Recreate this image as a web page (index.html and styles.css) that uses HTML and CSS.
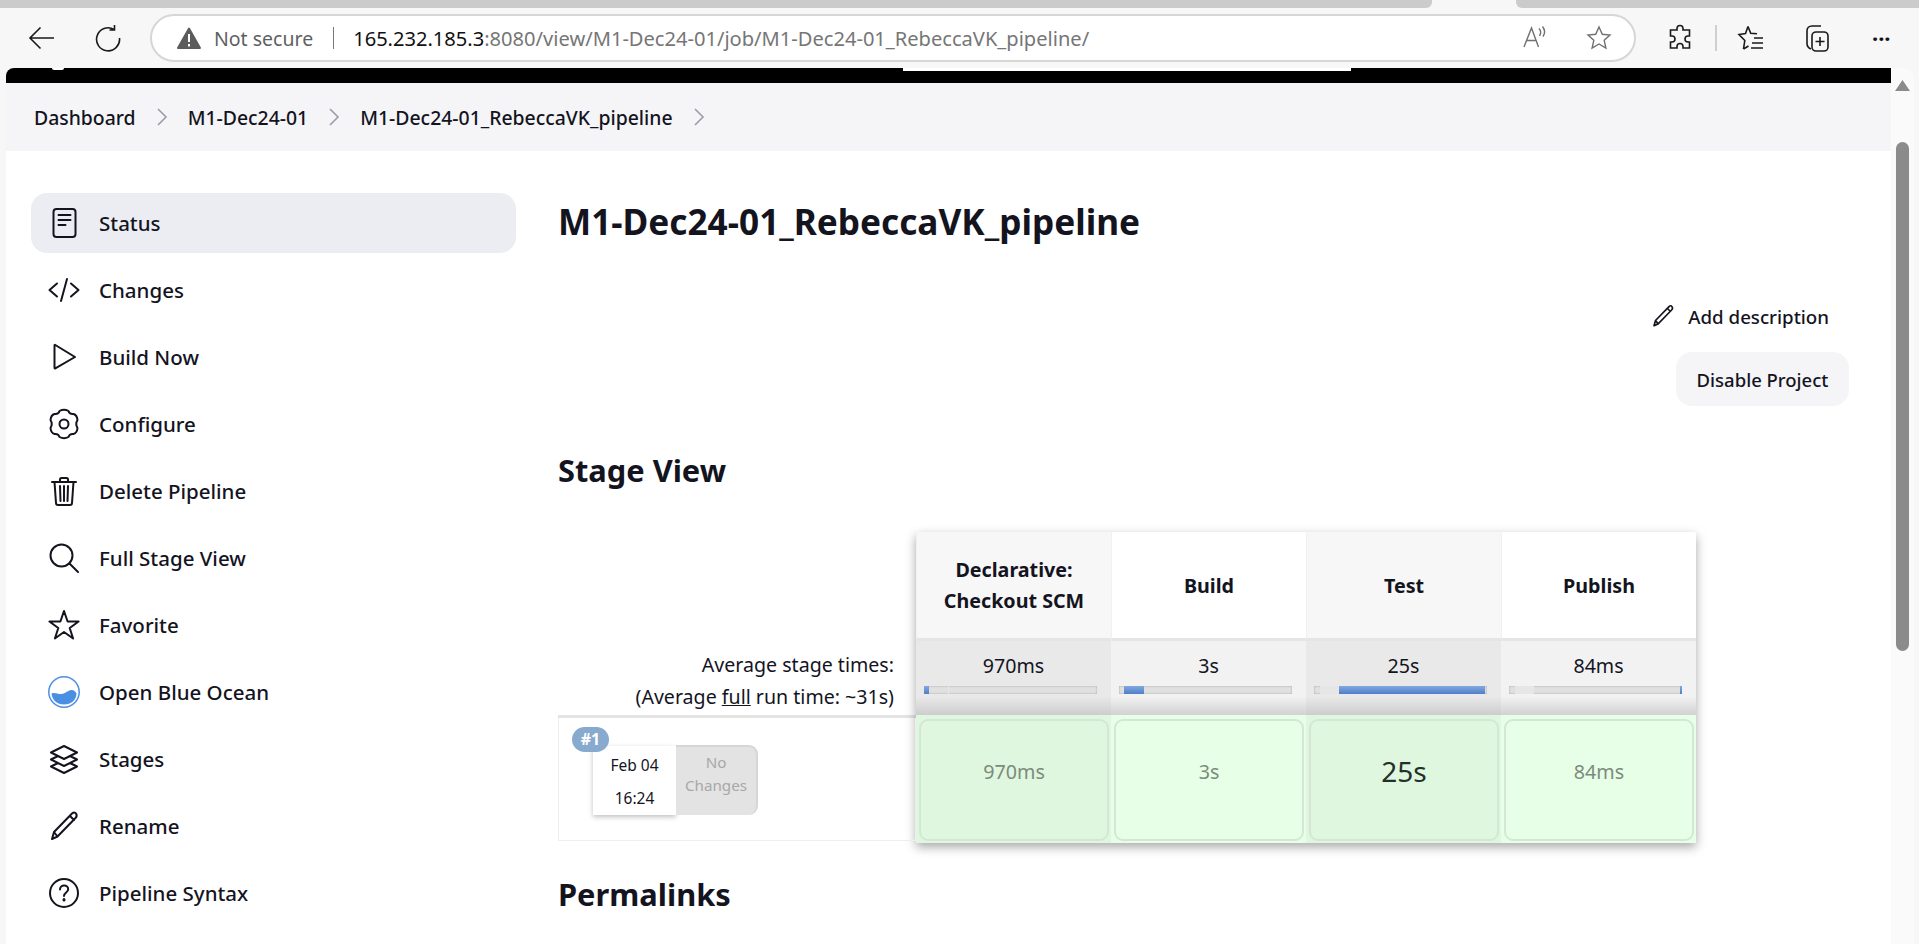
FILE: index.html
```html
<!DOCTYPE html>
<html lang="en">
<head>
    <meta charset="UTF-8">
    <meta name="viewport" content="width=device-width, initial-scale=1.0">
    <title>M1-Dec24-01_RebeccaVK_pipeline</title>
    <link rel="stylesheet" href="styles.css">
</head>
<body>
    <div class="tabstrip">
        <div class="tab-rest"></div>
        <div class="tab-gap"></div>
        <div class="tab-next"></div>
    </div>

    <div class="toolbar">
        <svg class="tool-back" width="28" height="28" viewBox="0 0 28 28"><path d="M26 14H2M12.500 3.500 2 14l10.500 10.500"/></svg>
        <svg class="tool-reload" width="28" height="28" viewBox="0 0 28 28"><path d="M20 5.500A11.500 11.500 0 1 0 25.500 14M20.500 1v5h-5"/></svg>
        <div class="addressbar">
            <svg class="warn" width="26" height="24" viewBox="0 0 26 24"><path d="M13 2.500 24 22H2z" fill="#5c5c5c" stroke="#5c5c5c" stroke-width="2" stroke-linejoin="round"/><path d="M13 8v8M13 18v2.500" stroke="#fff" stroke-width="2"/></svg>
            <span class="not-secure">Not secure</span>
            <span class="addr-sep"></span>
            <span class="url"><b>165.232.185.3</b>:8080/view/M1-Dec24-01/job/M1-Dec24-01_RebeccaVK_pipeline/</span>
            <span class="addr-space"></span>
            <svg class="addr-icon" width="26" height="26" viewBox="0 0 26 26"><path d="M2 22 9.500 3l7 19M4.500 15.500h10M17 3.500c2 2 2 5 .5 7.500M20.500 1.500c2.500 3 2.500 7 .5 10"/></svg>
            <svg class="addr-icon star-icon" width="26" height="26" viewBox="0 0 26 26"><path d="m13 2 3.300 7.300 7.700.8-5.800 5.200 1.700 7.700-6.900-4-6.900 4 1.700-7.700L2 10.100l7.700-.8z"/></svg>
        </div>
        <svg class="tool-icon ext" width="26" height="28" viewBox="0 0 26 28"><path d="M10 4.500c0-4 6-4 6 0V6h6.500v6H21c-4 0-4 6 0 6h1.500v6H16v-1.500c0-4-6-4-6 0V24H3.500v-6H5c4 0 4-6 0-6H3.500V6H10z"/></svg>
        <span class="tool-sep"></span>
        <svg class="tool-icon fav" width="28" height="28" viewBox="0 0 28 28"><path d="m11 2.500 2.700 6.800 6.300.5M6.500 25l1.300-8.500L2 10.500l6.500-1 2.500-7M6.500 25l5-3M17 14h9M15 19h11M14 24h12"/></svg>
        <svg class="tool-icon coll" width="28" height="30" viewBox="0 0 28 30"><path d="M8 26C5.500 25 4 23 4 20.500V8c0-3 2-5 5-5h9"/><rect x="9" y="9" width="16" height="19" rx="4"/><path d="M17 14v9M12.500 18.500h9"/></svg>
        <span class="tool-dots">···</span>
    </div>

    <div class="viewport">
        <div class="page">
            <div class="blackbar">
                <span class="black-dot"></span>
                <span class="black-search"></span>
            </div>
            <div class="breadcrumbs">
                <a>Dashboard</a>
                <svg class="crumb-arrow" width="12" height="20" viewBox="0 0 12 20"><path d="m2 2 8 8-8 8"/></svg>
                <a>M1-Dec24-01</a>
                <svg class="crumb-arrow" width="12" height="20" viewBox="0 0 12 20"><path d="m2 2 8 8-8 8"/></svg>
                <a>M1-Dec24-01_RebeccaVK_pipeline</a>
                <svg class="crumb-arrow" width="12" height="20" viewBox="0 0 12 20"><path d="m2 2 8 8-8 8"/></svg>
            </div>

            <div class="layout">
                <div class="sidebar">
                    <a class="nav-item active">
                        <svg class="ic" viewBox="0 0 32 32"><rect x="5.500" y="2" width="22" height="28" rx="3"/><path d="M10.500 8h12M10.500 13h12M10.500 18h7"/></svg>
                        Status
                    </a>
                    <a class="nav-item">
                        <svg class="ic" viewBox="0 0 32 32"><path d="M9 9.500 1.500 16 9 22.500M23 9.500l7.500 6.500-7.500 6.500M19 5l-6 22"/></svg>
                        Changes
                    </a>
                    <a class="nav-item">
                        <svg class="ic" viewBox="0 0 32 32"><path d="M6.500 4.500v22.500a.5.5 0 0 0 .8.400L27 16 7.300 4a.5.5 0 0 0-.8.500z"/></svg>
                        Build Now
                    </a>
                    <a class="nav-item">
                        <svg class="ic" viewBox="0 0 32 32"><path d="M11.500 3Q16 .5 20.500 3q1 3.500 5 3 3.500 1 4 6-2.500 4 0 8-.5 5-4 6-4-.5-5 3-4.500 2.500-9 0-1-3.500-5-3-3.500-1-4-6 2.500-4 0-8 .5-5 4-6 4 .5 5-3z"/><circle cx="16" cy="16" r="4.500"/></svg>
                        Configure
                    </a>
                    <a class="nav-item">
                        <svg class="ic" viewBox="0 0 32 32"><path d="M4 7h24M12 7V4.500A1.500 1.500 0 0 1 13.500 3h5A1.500 1.500 0 0 1 20 4.500V7M6.500 7 8 28a2 2 0 0 0 2 2h12a2 2 0 0 0 2-2l1.500-21M12 11l.5 15M16 11v15M20 11l-.5 15"/></svg>
                        Delete Pipeline
                    </a>
                    <a class="nav-item">
                        <svg class="ic" viewBox="0 0 32 32"><circle cx="13.500" cy="13.500" r="11"/><path d="m21.500 21.500 8.500 8.500"/></svg>
                        Full Stage View
                    </a>
                    <a class="nav-item">
                        <svg class="ic" viewBox="0 0 32 32"><path d="m16 2 3.600 10.500h11L21.700 19l3.400 10.500L16 23l-9.100 6.500L10.300 19 1.400 12.500h11z"/></svg>
                        Favorite
                    </a>
                    <a class="nav-item">
                        <svg class="ic ocean" viewBox="0 0 32 32"><circle cx="16" cy="16" r="15.200"/><path class="wave" d="M3.500 17.500c4-1.500 6.500 1 10 .5 4-.5 7-4 10-4s4 2 5 3.500C28.500 24 23 28.500 16 28.500S4 24 3.500 17.500z"/></svg>
                        Open Blue Ocean
                    </a>
                    <a class="nav-item">
                        <svg class="ic" viewBox="0 0 32 32"><path d="M16 3 29 9.500 16 16 3 9.500zM9 13.500 3 16.500 16 23l13-6.500-6-3M9 20.500 3 23.500 16 30l13-6.500-6-3"/></svg>
                        Stages
                    </a>
                    <a class="nav-item">
                        <svg class="ic" viewBox="0 0 32 32"><path d="M4 29l2-7L24 3.500c1.500-1.500 3-1.500 4 0s1 3-.5 4.500L9.500 26.500zM22 6l4 4M6 22l3.500 4.500"/></svg>
                        Rename
                    </a>
                    <a class="nav-item">
                        <svg class="ic" viewBox="0 0 32 32"><circle cx="16" cy="16" r="14"/><path d="M12 12.500c0-2.500 2-4 4.200-4s4 1.500 4 3.700c0 3.300-4.200 3.300-4.200 6.800"/><path class="dot" d="M16 22.500v.5"/></svg>
                        Pipeline Syntax
                    </a>
                    <a class="nav-item">
                        <svg class="ic" viewBox="0 0 32 32"><path d="M11 2h10"/></svg>
                    </a>
                </div>

                <div class="content">
                    <h1>M1-Dec24-01_RebeccaVK_pipeline</h1>

                    <div class="actions">
                        <a class="add-desc">
                            <svg class="ic-small" viewBox="0 0 32 32"><path d="M4 29l2-7L24 3.500c1.500-1.500 3-1.500 4 0s1 3-.5 4.500L9.500 26.500zM22 6l4 4M6 22l3.500 4.500"/></svg>
                            Add description
                        </a>
                        <button class="disable-btn">Disable Project</button>
                    </div>

                    <h2 class="stage-title">Stage View</h2>

                    <div class="stage-view">
                        <div class="labels">
                            <div class="avg-label">
                                <div>Average stage times:</div>
                                <div>(Average <u>full</u> run time: ~31s)</div>
                            </div>
                            <div class="build-row">
                                <span class="badge">#1</span>
                                <div class="build-date">
                                    <div>Feb 04</div>
                                    <div>16:24</div>
                                </div>
                                <div class="no-changes">No Changes</div>
                            </div>
                        </div>

                        <div class="stages">
                            <div class="stage-col odd">
                                <div class="stage-head">Declarative:<br>Checkout SCM</div>
                                <div class="stage-avg">
                                    <div>970ms</div>
                                    <div class="bar"><span class="bar-tick" style="left: 24px; width: 1px"></span><span class="bar-fill" style="left: 0; width: 5px"></span></div>
                                </div>
                                <div class="stage-cell"><div class="cell-box">970ms</div></div>
                            </div>
                            <div class="stage-col">
                                <div class="stage-head">Build</div>
                                <div class="stage-avg">
                                    <div>3s</div>
                                    <div class="bar"><span class="bar-fill" style="left: 5px; width: 20px"></span></div>
                                </div>
                                <div class="stage-cell"><div class="cell-box">3s</div></div>
                            </div>
                            <div class="stage-col odd">
                                <div class="stage-head">Test</div>
                                <div class="stage-avg">
                                    <div>25s</div>
                                    <div class="bar"><span class="bar-tick" style="left: 6px; width: 19px"></span><span class="bar-fill" style="left: 25px; width: 146px"></span></div>
                                </div>
                                <div class="stage-cell"><div class="cell-box big">25s</div></div>
                            </div>
                            <div class="stage-col">
                                <div class="stage-head">Publish</div>
                                <div class="stage-avg">
                                    <div>84ms</div>
                                    <div class="bar"><span class="bar-tick" style="left: 6px; width: 19px"></span><span class="bar-fill" style="left: 171px; width: 2px"></span></div>
                                </div>
                                <div class="stage-cell"><div class="cell-box">84ms</div></div>
                            </div>
                        </div>
                    </div>

                    <h2 class="permalinks">Permalinks</h2>
                </div>
            </div>
        </div>

        <div class="scrollbar">
            <span class="scroll-up"></span>
            <span class="scroll-thumb"></span>
        </div>
    </div>
</body>
</html>
```

FILE: styles.css
```css
* {
    box-sizing: border-box;
}

html, body {
    height: 100%;
}

body {
    margin: 0;
    overflow: hidden;
    display: flex;
    flex-direction: column;
    background-color: #f7f7f7;
    color: #14141f;
    font-family: "Noto Sans", "Open Sans", sans-serif;
}

/* browser chrome */
.tabstrip {
    display: flex;
    height: 8px;
    flex: none;
}

.tab-rest {
    width: 1432px;
    background-color: #cbcbcb;
    border-bottom-right-radius: 6px;
}

.tab-gap {
    width: 84px;
}

.tab-next {
    flex: 1;
    background-color: #cbcbcb;
    border-bottom-left-radius: 6px;
}

.toolbar {
    display: flex;
    align-items: center;
    height: 60px;
    flex: none;
    padding-left: 28px;
}

.toolbar svg {
    fill: none;
    stroke: #1a1a1a;
    stroke-width: 1.6;
    flex: none;
}

.tool-reload {
    margin-left: 38px;
}

.addressbar {
    display: flex;
    align-items: center;
    width: 1486px;
    height: 48px;
    margin-left: 28px;
    padding-left: 24px;
    background-color: #fff;
    border: 2px solid #d6d6d6;
    border-radius: 24px;
    font-size: 19.500px;
    white-space: nowrap;
}

.toolbar .warn {
    stroke: none;
}

.not-secure {
    margin-left: 12px;
    color: #5f5f5f;
}

.addr-sep {
    width: 1px;
    height: 22px;
    margin: 0 19px 0 20px;
    background-color: #777;
}

.url {
    color: #767676;
    font-size: 20.100px;
}

.url b {
    font-weight: 400;
    color: #111;
}

.addr-space {
    flex: 1;
}

.toolbar .addr-icon {
    stroke: #707070;
    stroke-width: 1.4;
    margin-right: 22px;
}

.toolbar .star-icon {
    margin-left: 16px;
}

.ext {
    margin-left: 31px;
}

.tool-sep {
    width: 2px;
    height: 26px;
    margin: 0 20px 0 22px;
    background-color: #d0d0d0;
}

.coll {
    margin-left: 38px;
}

.tool-dots {
    margin-left: 41px;
    font-size: 22px;
    font-weight: 700;
    line-height: 1;
}

/* page area */
.viewport {
    flex: 1;
    display: flex;
    min-height: 0;
    padding-left: 6px;
    padding-right: 5px;
}

.page {
    flex: 1;
    min-width: 0;
    overflow: hidden;
    background-color: #fff;
    border-top-left-radius: 8px;
}

.blackbar {
    position: relative;
    height: 15px;
    background-color: #000;
}

.black-dot {
    position: absolute;
    left: 46px;
    top: 0;
    width: 12px;
    height: 2px;
    background-color: #fff;
    border-radius: 0 0 6px 6px;
}

.black-search {
    position: absolute;
    left: 897px;
    top: 0;
    width: 448px;
    height: 3px;
    background-color: #fff;
}

.breadcrumbs {
    display: flex;
    align-items: center;
    height: 68px;
    padding-left: 28px;
    background-color: #f5f5f8;
    font-size: 19.400px;
    font-weight: 500;
}

.crumb-arrow {
    margin: 0 20px 0 20px;
    fill: none;
    stroke: #9b9bad;
    stroke-width: 1.6;
}

.layout {
    display: flex;
}

.sidebar {
    flex: none;
    width: 510px;
    padding: 42px 0 0 25px;
}

.nav-item {
    display: flex;
    align-items: center;
    gap: 19px;
    width: 485px;
    height: 60px;
    margin-bottom: 7px;
    padding-left: 17px;
    border-radius: 16px;
    font-size: 20.500px;
    font-weight: 500;
}

.nav-item.active {
    background-color: #ecedf2;
}

.ic {
    flex: none;
    width: 32px;
    height: 32px;
    fill: none;
    stroke: #14141f;
    stroke-width: 2;
    stroke-linecap: round;
    stroke-linejoin: round;
}

.ocean {
    stroke: #4a90e2;
    stroke-width: 1.500;
}

.ocean .wave {
    fill: #4a90e2;
    stroke: none;
}

.ic .dot {
    stroke-width: 3;
}

.content {
    flex: 1;
    min-width: 0;
    padding-left: 42px;
}

h1 {
    margin: 47px 0 0;
    font-size: 35.200px;
    line-height: 46px;
    font-weight: 700;
}

.actions {
    display: flex;
    flex-direction: column;
    align-items: flex-end;
    margin-top: 57px;
    padding-right: 42px;
}

.add-desc {
    display: flex;
    align-items: center;
    gap: 13px;
    height: 30px;
    margin-right: 20px;
    font-size: 18.700px;
    font-weight: 500;
}

.ic-small {
    width: 24px;
    height: 24px;
    fill: none;
    stroke: #14141f;
    stroke-width: 2.200;
    stroke-linejoin: round;
}

.disable-btn {
    height: 54px;
    width: 173px;
    margin-top: 21px;
    background-color: #f5f5f8;
    border: none;
    border-radius: 16px;
    color: #14141f;
    font-family: inherit;
    font-size: 18.500px;
    font-weight: 500;
}

h2 {
    margin: 0;
    font-size: 30.800px;
    line-height: 40px;
    font-weight: 700;
}

.stage-title {
    margin-top: 44px;
}

/* stage view table */
.stage-view {
    display: flex;
    margin-top: 42px;
}

.labels {
    flex: none;
    width: 358px;
    padding-top: 106px;
}

.avg-label {
    height: 80px;
    padding: 11px 22px 0 0;
    border-bottom: 3px solid #e4e4e4;
    text-align: right;
    font-size: 19.600px;
    line-height: 32px;
    white-space: nowrap;
}

.build-row {
    position: relative;
    display: flex;
    height: 123px;
    padding: 28px 0 0 34px;
    border: 1px solid #eeeeee;
    border-top: none;
}

.badge {
    position: absolute;
    left: 13px;
    top: 9px;
    width: 37px;
    height: 25px;
    background-color: #88aacf;
    border-radius: 13px;
    color: #fff;
    font-size: 16px;
    font-weight: 700;
    line-height: 25px;
    text-align: center;
}

.build-date {
    display: flex;
    flex-direction: column;
    justify-content: space-around;
    width: 83px;
    height: 69px;
    padding-top: 2px;
    background-color: #fff;
    box-shadow: 0 2px 5px rgba(0, 0, 0, 0.25);
    font-size: 15.500px;
    text-align: center;
}

.no-changes {
    display: flex;
    align-items: center;
    justify-content: center;
    width: 82px;
    height: 70px;
    margin-top: -1px;
    padding-bottom: 15px;
    background-color: #e3e3e3;
    border-top: 2px solid #d6d6d6;
    border-right: 2px solid #d6d6d6;
    border-radius: 0 9px 9px 0;
    color: #a8a8a8;
    font-size: 15.200px;
    line-height: 23px;
    text-align: center;
}

.stages {
    display: flex;
    flex: none;
    width: 780px;
    height: 311px;
    box-shadow: 0 4px 10px rgba(0, 0, 0, 0.35);
}

.stage-col {
    width: 195px;
    text-align: center;
}

.stage-head {
    display: flex;
    align-items: center;
    justify-content: center;
    height: 109px;
    background-color: #fff;
    border-bottom: 3px solid #e5e5e5;
    border-left: 1px solid #f0f0f0;
    font-size: 19.700px;
    font-weight: 700;
    line-height: 31px;
}

.stage-avg {
    height: 74px;
    padding: 9px 0 0;
    background: linear-gradient(#f2f2f2 75%, #d2d2d2);
    font-size: 19.600px;
    line-height: 32px;
}

.bar {
    position: relative;
    width: 173px;
    height: 8px;
    margin: 4px 0 0 8px;
    background-color: #e0e0e0;
    box-shadow: inset 0 0 2px rgba(0, 0, 0, 0.3);
}

.bar-fill,
.bar-tick {
    position: absolute;
    top: 0;
    height: 8px;
}

.bar-fill {
    background: linear-gradient(#82a8df, #4f7fcb);
}

.bar-tick {
    background-color: #e6e6e6;
}

.stage-cell {
    height: 128px;
    padding: 4px 2px 2px 3px;
    background-color: #e6ffe6;
}

.cell-box {
    display: flex;
    align-items: center;
    justify-content: center;
    height: 122px;
    padding-bottom: 18px;
    background-color: #e6ffe6;
    border: 2px solid #d5e6d5;
    border-radius: 9px;
    color: #7d8b7d;
    font-size: 19.700px;
}

.cell-box.big {
    color: #26302a;
    font-size: 28px;
}

.stage-col.odd .stage-head {
    background-color: #f7f7f7;
}

.stage-col.odd .stage-avg {
    background: linear-gradient(#e9e9e9 75%, #cdcdcd);
}

.stage-col.odd .stage-cell,
.stage-col.odd .cell-box {
    background-color: #def7de;
}

.permalinks {
    margin-top: 31px;
}

/* scrollbar */
.scrollbar {
    position: relative;
    flex: none;
    width: 23px;
    background-color: #fafafa;
    border-top-right-radius: 10px;
}

.scroll-up {
    position: absolute;
    left: 4px;
    top: 12px;
    width: 15px;
    height: 11px;
    background-color: #8b8b8b;
    clip-path: polygon(50% 0, 100% 100%, 0 100%);
}

.scroll-thumb {
    position: absolute;
    left: 5px;
    top: 74px;
    width: 13px;
    height: 509px;
    background-color: #8b8b8b;
    border-radius: 7px;
}
```
